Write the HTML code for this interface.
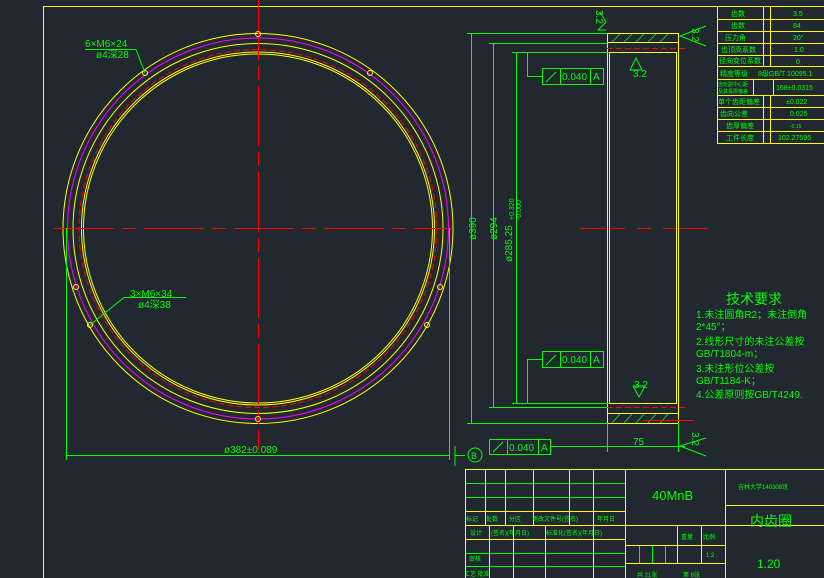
<!DOCTYPE html>
<html><head><meta charset="utf-8"><style>
html,body{margin:0;padding:0;background:#212830;}
svg{display:block;font-family:"Liberation Sans","Noto Sans CJK SC",sans-serif;}
</style></head><body>
<svg width="824" height="578" viewBox="0 0 824 578" xmlns="http://www.w3.org/2000/svg">
<rect width="824" height="578" fill="#212830"/>
<g stroke="#ffff00" stroke-width="1" fill="none">
<polyline points="43.5,578 43.5,6.5 824,6.5"/>
</g>
<g fill="none" stroke-width="1">
<circle cx="258" cy="228.5" r="195" stroke="#ffff00"/>
<circle cx="258" cy="228.5" r="190.5" stroke="#ff00ff"/>
<circle cx="258" cy="228.5" r="185" stroke="#ffff00"/>
<circle cx="258" cy="228.5" r="179" stroke="#ff0000" stroke-dasharray="6,3"/>
<circle cx="258" cy="228.5" r="176.5" stroke="#ffff00"/>
<circle cx="258" cy="228.5" r="174.5" stroke="#ffff00"/>
</g>
<g stroke="#ff0000" stroke-width="1">
<line x1="258.5" y1="0" x2="258.5" y2="450" stroke-dasharray="60,6,14,6"/>
<line x1="54" y1="228.5" x2="452" y2="228.5" stroke-dasharray="60,8,14,8"/>
<line x1="580" y1="228.5" x2="720" y2="228.5" stroke-dasharray="45,12,14,12"/>
</g>
<g fill="none" stroke="#ffff00">
<circle cx="258" cy="34" r="2.5"/><circle cx="145" cy="73" r="2.5"/><circle cx="370" cy="73" r="2.5"/>
<circle cx="76" cy="287" r="2.5"/><circle cx="90" cy="325" r="2.5"/><circle cx="258" cy="419" r="2.5"/>
<circle cx="427" cy="325" r="2.5"/><circle cx="440" cy="287" r="2.5"/>
</g>
<g fill="#00ff00" font-size="10">
<text x="85" y="47">6×M6×24</text>
<text x="96" y="58">ø4深28</text>
<text x="130" y="297">3×M6×34</text>
<text x="138" y="308">ø4深38</text>
<text x="224" y="453">ø382±0.089</text>
</g>
<g stroke="#00ff00" fill="none">
<line x1="85" y1="49.5" x2="136" y2="49.5"/><line x1="136" y1="49.5" x2="145" y2="73"/>
<line x1="124" y1="297.5" x2="186" y2="297.5"/><line x1="124" y1="297.5" x2="90" y2="325"/>
<line x1="66.5" y1="228" x2="66.5" y2="460"/><line x1="449.5" y1="228" x2="449.5" y2="460"/>
<line x1="66" y1="455.5" x2="450" y2="455.5"/>
<line x1="455" y1="446" x2="455" y2="466"/><line x1="455" y1="455.5" x2="465" y2="455.5"/>
<circle cx="475" cy="455" r="7"/>
</g>
<text x="471" y="459" fill="#00ff00" font-size="9">B</text>
<g stroke="#ffff00" fill="none">
<rect x="607.5" y="33.5" width="71" height="390"/>
<line x1="607" y1="42.5" x2="679" y2="42.5"/>
<line x1="607" y1="413.5" x2="679" y2="413.5"/>
<rect x="609.5" y="52.5" width="67" height="351"/>
</g>
<g stroke="#00ff00" stroke-width="0.8">
<line x1="612" y1="42" x2="620" y2="34"/><line x1="624" y1="42" x2="632" y2="34"/><line x1="636" y1="42" x2="644" y2="34"/><line x1="648" y1="42" x2="656" y2="34"/><line x1="660" y1="42" x2="668" y2="34"/>
<line x1="612" y1="423" x2="620" y2="414"/><line x1="624" y1="423" x2="632" y2="414"/><line x1="636" y1="423" x2="644" y2="414"/><line x1="648" y1="423" x2="656" y2="414"/><line x1="660" y1="423" x2="668" y2="414"/>
</g>
<g stroke="#ff0000" stroke-dasharray="6,3"><line x1="607" y1="48.5" x2="688" y2="48.5"/><line x1="607" y1="407.5" x2="688" y2="407.5"/></g>
<line x1="643" y1="420.5" x2="694" y2="420.5" stroke="#ff0000"/>
<g stroke="#00ff00" fill="none">
<line x1="471.5" y1="33" x2="471.5" y2="423"/><line x1="467" y1="33.5" x2="607" y2="33.5"/><line x1="467" y1="423.5" x2="607" y2="423.5"/>
<line x1="493.5" y1="43" x2="493.5" y2="407"/><line x1="489" y1="43.5" x2="607" y2="43.5"/><line x1="489" y1="407.5" x2="607" y2="407.5"/>
<line x1="516.5" y1="52" x2="516.5" y2="403"/><line x1="512" y1="52.5" x2="609" y2="52.5"/><line x1="512" y1="403.5" x2="609" y2="403.5"/>
<polyline points="527.5,403 527.5,359.5 542,359.5"/><polyline points="527.5,52 527.5,76.5 542,76.5"/>
<rect x="542.5" y="68.5" width="61" height="16"/><line x1="560.5" y1="68" x2="560.5" y2="85"/><line x1="590.5" y1="68" x2="590.5" y2="85"/>
<rect x="542.5" y="351.5" width="61" height="16"/><line x1="560.5" y1="351" x2="560.5" y2="368"/><line x1="590.5" y1="351" x2="590.5" y2="368"/>
<rect x="489.5" y="439.5" width="61" height="15"/><line x1="507.5" y1="439" x2="507.5" y2="455"/><line x1="538.5" y1="439" x2="538.5" y2="455"/>
<line x1="550" y1="446.5" x2="685" y2="446.5"/><line x1="607.5" y1="423" x2="607.5" y2="452"/><line x1="678.5" y1="423" x2="678.5" y2="452"/>
<line x1="546" y1="82" x2="556" y2="72"/><line x1="546" y1="365" x2="556" y2="355"/><line x1="493" y1="452" x2="503" y2="442"/>
<line x1="465" y1="497.5" x2="625" y2="497.5"/><line x1="465" y1="483.5" x2="625" y2="483.5"/>
<line x1="465" y1="553.5" x2="625" y2="553.5"/><line x1="465" y1="566.5" x2="625" y2="566.5"/>
<line x1="639.5" y1="546" x2="639.5" y2="563"/><line x1="652.5" y1="546" x2="652.5" y2="563"/><line x1="665.5" y1="546" x2="665.5" y2="563"/>
<polyline points="600,12 606,22 598,30 606,30"/><polyline points="706,26 680,36 706,46"/><polyline points="630,70 636,58 642,70 630,70"/><polyline points="633,386 639,397 645,386 633,386"/><polyline points="706,438 680,446 706,456"/>
</g>
<g fill="#00ff00" font-size="10">
<text x="562" y="80">0.040</text><text x="593" y="80">A</text>
<text x="562" y="363">0.040</text><text x="593" y="363">A</text>
<text x="509" y="451">0.040</text><text x="541" y="451">A</text>
<text x="633" y="445">75</text>
<text x="633" y="77">3.2</text><text x="634" y="388">3.2</text>
<text transform="translate(476,240) rotate(-90)">ø390</text>
<text transform="translate(497,240) rotate(-90)">ø294</text>
<text transform="translate(512,262) rotate(-90)">ø285.25</text>
<text transform="translate(514,220) rotate(-90)" font-size="7">+0.320</text>
<text transform="translate(521,220) rotate(-90)" font-size="7">-0.000</text>
<text transform="translate(596,10) rotate(90)">3.2</text>
<text transform="translate(692,28) rotate(90)">3.2</text>
<text transform="translate(692,432) rotate(90)">3.2</text>
</g>
<g fill="#00ff00" font-size="10">
<text x="726" y="304" font-size="14">技术要求</text>
<text x="696" y="318">1.未注圆角R2；未注倒角</text>
<text x="696" y="330">2*45°；</text>
<text x="696" y="345">2.线形尺寸的未注公差按</text>
<text x="696" y="357">GB/T1804-m；</text>
<text x="696" y="372">3.未注形位公差按</text>
<text x="696" y="384">GB/T1184-K；</text>
<text x="696" y="398">4.公差原则按GB/T4249.</text>
</g>
<g stroke="#ffff00" fill="none">
<rect x="717.5" y="6.5" width="110" height="137"/>
<line x1="717" y1="19.5" x2="824" y2="19.5"/><line x1="717" y1="31.5" x2="824" y2="31.5"/><line x1="717" y1="43.5" x2="824" y2="43.5"/><line x1="717" y1="55.5" x2="824" y2="55.5"/><line x1="717" y1="66.5" x2="824" y2="66.5"/><line x1="717" y1="79.5" x2="824" y2="79.5"/><line x1="717" y1="95.5" x2="824" y2="95.5"/><line x1="717" y1="107.5" x2="824" y2="107.5"/><line x1="717" y1="119.5" x2="824" y2="119.5"/><line x1="717" y1="131.5" x2="824" y2="131.5"/>
<line x1="763.5" y1="6" x2="763.5" y2="66"/><line x1="770.5" y1="6" x2="770.5" y2="66"/>
<line x1="753.5" y1="79" x2="753.5" y2="95"/><line x1="773.5" y1="79" x2="773.5" y2="95"/>
<line x1="763.5" y1="95" x2="763.5" y2="143"/><line x1="770.5" y1="95" x2="770.5" y2="143"/>
</g>
<g fill="#00ff00" font-size="7">
<text x="731" y="16">齿数</text><text x="731" y="28">齿数</text><text x="725" y="40">压力角</text><text x="721" y="52">齿顶高系数</text><text x="719" y="63">径向变位系数</text><text x="720" y="76">精度等级</text><text x="718" y="86" font-size="5">齿轮副中心距</text><text x="718" y="93" font-size="5">及其极限偏差</text><text x="718" y="104">单个齿距偏差</text><text x="720" y="116">齿向公差</text><text x="726" y="128">齿厚偏差</text><text x="726" y="140">工件长度</text>
<text x="793" y="16">3.5</text><text x="793" y="28">84</text><text x="793" y="40">20°</text><text x="794" y="52">1.0</text><text x="796" y="64">0</text><text x="758" y="76">8级GB/T 10095.1</text><text x="776" y="90">168±0.0315</text><text x="786" y="104">±0.022</text><text x="790" y="116">0.025</text><text x="790" y="128" font-size="5">-0.15</text><text x="778" y="140">102.27595</text>
</g>
<g stroke="#ffff00" fill="none">
<rect x="465.5" y="469.5" width="360" height="110"/>
<line x1="465" y1="511.5" x2="625" y2="511.5"/><line x1="465" y1="525.5" x2="824" y2="525.5"/><line x1="465" y1="539.5" x2="625" y2="539.5"/>
<line x1="625" y1="545.5" x2="725" y2="545.5"/><line x1="625" y1="563.5" x2="725" y2="563.5"/><line x1="725" y1="505.5" x2="824" y2="505.5"/>
<line x1="485.5" y1="469" x2="485.5" y2="525"/><line x1="505.5" y1="469" x2="505.5" y2="525"/><line x1="533.5" y1="469" x2="533.5" y2="525"/><line x1="569.5" y1="469" x2="569.5" y2="525"/><line x1="593.5" y1="469" x2="593.5" y2="578"/>
<line x1="489.5" y1="525" x2="489.5" y2="578"/><line x1="513.5" y1="525" x2="513.5" y2="578"/><line x1="545.5" y1="525" x2="545.5" y2="578"/>
<line x1="625.5" y1="469" x2="625.5" y2="578"/><line x1="725.5" y1="469" x2="725.5" y2="578"/><line x1="677.5" y1="525" x2="677.5" y2="563"/><line x1="701.5" y1="525" x2="701.5" y2="563"/>
</g>
<g fill="#00ff00" font-size="6">
<text x="466" y="521">标记</text><text x="486" y="521">处数</text><text x="509" y="521">分区</text><text x="532" y="521">更改文件号(签名)</text><text x="597" y="521">年月日</text>
<text x="470" y="535">设计</text><text x="491" y="535">(签名)(年月日)</text><text x="546" y="535">标准化(签名)(年月日)</text>
<text x="469" y="561">审核</text><text x="464" y="576">工艺 批准</text>
<text x="681" y="539">重量</text><text x="703" y="539">比例</text><text x="706" y="557">1:2</text>
<text x="637" y="577">共 21张</text><text x="683" y="577">第 8张</text>
<text x="738" y="489">吉林大学140308班</text>
<text x="652" y="500" font-size="13">40MnB</text>
<text x="750" y="526" font-size="14">内齿圈</text>
<text x="757" y="568" font-size="12">1.20</text>
</g>
</svg>
</body></html>
